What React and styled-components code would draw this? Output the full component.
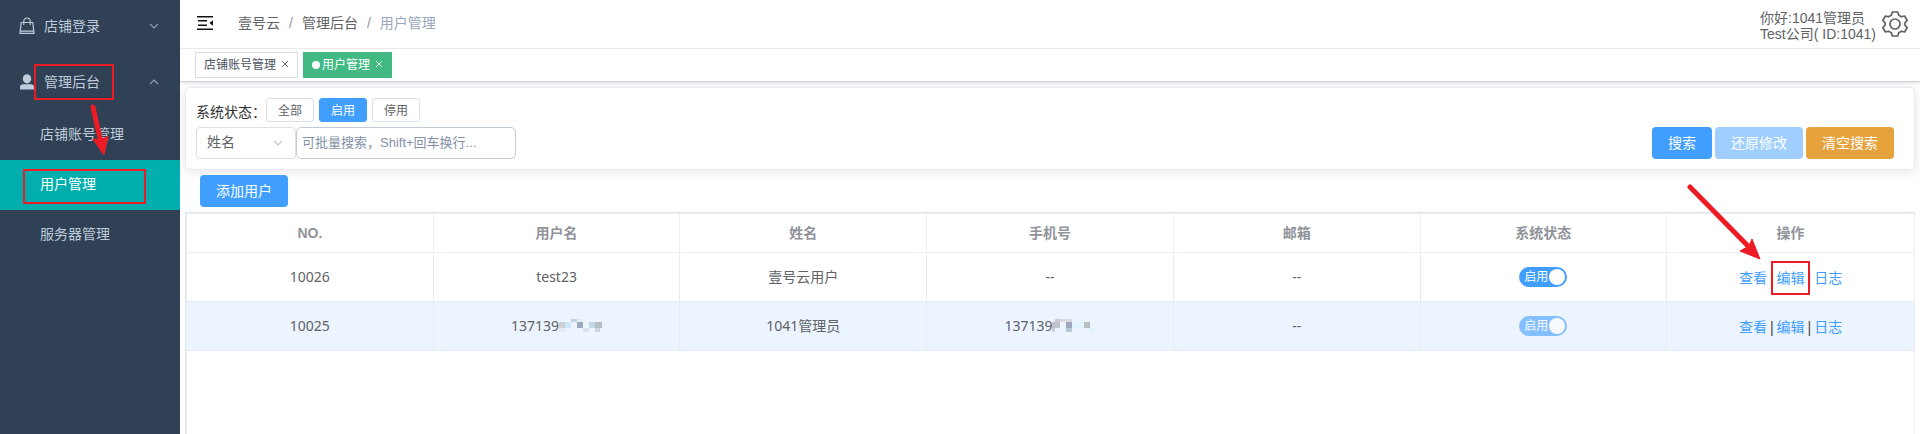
import React from 'react';
import styled, { createGlobalStyle, css } from 'styled-components';

const GlobalStyle = createGlobalStyle`
  * {
    box-sizing: border-box;
  }

  body {
    margin: 0;
    background: #fff;
    color: #606266;
    font-family: "Liberation Sans", "Noto Sans CJK SC", sans-serif;
    font-size: 14px;
    line-height: 20px;
  }

  button, input, select {
    font-family: inherit;
  }

  a {
    text-decoration: none;
  }
`;

const Layout = styled.div`
  display: flex;
  min-height: 100vh;
`;

/* sidebar */

const Sidebar = styled.aside`
  flex: 0 0 180px;
  overflow: hidden;
  background: #304156;
`;

const Menu = styled.nav`
  display: flex;
  flex-direction: column;
  margin-top: -2px;
`;

const MenuGroup = styled.button`
  display: flex;
  align-items: center;
  gap: 8px;
  height: 56px;
  padding: 0 20px 0 18px;
  border: 0;
  background: transparent;
  color: #bfcbd9;
  font-size: 14px;
  line-height: 20px;
  text-align: left;
  cursor: pointer;
`;

const GroupLabel = styled.span`
  flex: 1;
`;

const MenuLink = styled.a`
  display: flex;
  align-items: center;
  height: 50px;
  padding: 0 0 2px 40px;
  color: #bfcbd9;

  ${({ $active }) => $active && css`
    background: #00aeae;
    color: #fff;
  `}
`;

/* header */

const Main = styled.main`
  display: flex;
  flex: 1;
  flex-direction: column;
  min-width: 0;
`;

const Header = styled.header`
  display: flex;
  align-items: center;
  height: 49px;
  padding: 0 12px 0 16px;
  border-bottom: 1px solid #eee;
`;

const IconButton = styled.button`
  display: flex;
  padding: 0;
  border: 0;
  background: transparent;
  cursor: pointer;
`;

const FoldButton = styled(IconButton)`
  padding-bottom: 3px;
`;

const Breadcrumb = styled.nav`
  display: flex;
  flex: 1;
  gap: 9px;
  padding: 0 0 2px 24px;
`;

const Crumb = styled.a`
  color: ${({ $current }) => ($current ? '#97a8be' : '#606266')};
`;

const Slash = styled.span`
  color: #8f95a0;
`;

const Account = styled.div`
  margin-right: 6px;
  padding-top: 3px;
  line-height: 16px;
`;

/* opened pages */

const Tags = styled.div`
  display: flex;
  align-items: center;
  gap: 5px;
  height: 33px;
  padding: 0 15px;
  border-bottom: 1px solid #d0d4db;
  box-shadow: 0 1px 3px rgba(0, 0, 0, .12);
`;

const Tag = styled.div`
  display: flex;
  align-items: center;
  height: 26px;
  padding: 0 8px;
  border: 1px solid ${({ $active }) => ($active ? '#42b983' : '#d8dce5')};
  background: ${({ $active }) => ($active ? '#42b983' : '#fff')};
  color: ${({ $active }) => ($active ? '#fff' : '#495060')};
  font-size: 12px;
`;

const Dot = styled.i`
  width: 8px;
  height: 8px;
  margin-right: 2px;
  border-radius: 50%;
  background: #fff;
`;

const TagLink = styled.a`
  color: inherit;
`;

const TagClose = styled(IconButton)`
  padding: 0 0 2px 5px;
  color: inherit;
`;

/* search panel */

const Content = styled.div`
  display: flex;
  flex: 1;
  flex-direction: column;
  padding: 5px 5px 0;
`;

const Card = styled.section`
  display: flex;
  flex-direction: column;
  gap: 5px;
  padding: 10px 20px 10px 10px;
  border: 1px solid #e6e9f0;
  border-radius: 4px;
  box-shadow: 0 2px 12px rgba(0, 0, 0, .1);
`;

const StatusRow = styled.div`
  display: flex;
  align-items: center;
  gap: 5px;
`;

const StatusLabel = styled.span`
  margin-right: -5px;
  padding-top: 4px;
  color: #303133;
`;

const StatusButton = styled.button`
  width: 48px;
  height: 24px;
  padding: 0 0 1px;
  border: 1px solid ${({ $active }) => ($active ? '#409eff' : '#dcdfe6')};
  border-radius: 3px;
  background: ${({ $active }) => ($active ? '#409eff' : '#fff')};
  color: ${({ $active }) => ($active ? '#fff' : '#606266')};
  font-size: 12px;
  cursor: pointer;
`;

const SearchRow = styled.div`
  display: flex;
  align-items: center;
`;

const SelectBox = styled.div`
  display: flex;
  position: relative;
  width: 100px;

  svg {
    position: absolute;
    top: 10px;
    right: 12px;
    pointer-events: none;
  }
`;

const Select = styled.select`
  appearance: none;
  width: 100%;
  height: 32px;
  padding: 0 10px 2px;
  border: 1px solid #dcdfe6;
  border-radius: 4px;
  background: #fff;
  color: #606266;
  font-size: 14px;
`;

const SearchInput = styled.input`
  width: 220px;
  height: 32px;
  padding: 0 5px 2px;
  border: 1px solid #bfcbd9;
  border-radius: 5px;
  color: #606266;
  font-size: 13px;

  &::placeholder {
    color: #8391a5;
  }
`;

const Actions = styled.div`
  display: flex;
  gap: 3px;
  margin-left: auto;
`;

const colors = {
  primary: '#409eff',
  disabled: '#a0cfff',
  warning: '#e6a23c',
};

const Button = styled.button`
  height: 32px;
  padding: 0 16px 2px;
  border: 0;
  border-radius: 4px;
  background: ${({ $type }) => colors[$type]};
  color: #fff;
  font-size: 14px;
  cursor: pointer;
`;

const Toolbar = styled.div`
  display: flex;
  padding: 5px 15px;
`;

/* table */

const TableWrapper = styled.div`
  flex: 1;
  border: solid #dfe6ec;
  border-width: 1px 0 0 1px;
`;

const TableInner = styled.div`
  height: 100%;
  border: 1px solid #ebeef5;
  border-bottom: 0;
`;

const Table = styled.table`
  width: 100%;
  table-layout: fixed;
  border-spacing: 0;
`;

const Th = styled.th`
  height: 39px;
  padding: 0 0 1px;
  border-bottom: 1px solid #ebeef5;
  color: #909399;
  font-weight: 700;

  &:not(:last-child) {
    border-right: 1px solid #ebeef5;
  }
`;

const Td = styled.td`
  height: 49px;
  padding: 0 0 1px;
  border-bottom: 1px solid #e6ebf5;
  text-align: center;
  font-family: "Noto Sans", "Noto Sans CJK SC", sans-serif;

  &:not(:last-child) {
    border-right: 1px solid #e6ebf5;
  }
`;

const Tr = styled.tr`
  background: ${({ $current }) => ($current ? '#ecf4ff' : '#fff')};
`;

const Masked = styled.span`
  display: inline-flex;
  align-items: center;
`;

const Switch = styled.label`
  display: inline-flex;
  align-items: center;
  gap: 1px;
  width: 48px;
  height: 20px;
  padding: 0 2px 0 5px;
  border-radius: 10px;
  background: #409eff;
  color: #fff;
  font-size: 12px;
  vertical-align: top;
  opacity: ${({ $disabled }) => ($disabled ? .6 : 1)};

  &:after {
    content: '';
    flex: 0 0 16px;
    height: 16px;
    border-radius: 50%;
    background: #fff;
  }
`;

const SwitchInput = styled.input`
  appearance: none;
  position: absolute;
  width: 0;
  height: 0;
  margin: 0;
`;

const Operations = styled.div`
  display: flex;
  justify-content: center;
  gap: 1px;
  padding-top: 3px;
`;

const Operation = styled.a`
  color: #409eff;
`;

const Bar = styled.span`
  color: #303133;
`;

/* guide marks drawn over the page */

const Marked = styled.span`
  position: relative;
`;

const Frame = styled.i`
  position: absolute;
  top: ${({ $top }) => $top}px;
  left: ${({ $left }) => $left}px;
  width: ${({ $width }) => $width}px;
  height: ${({ $height }) => $height}px;
  border: 2px solid #ed1c24;
  pointer-events: none;
`;

const ArrowSvg = styled.svg`
  position: absolute;
  top: ${({ $top }) => $top}px;
  left: ${({ $left }) => $left}px;
  z-index: 1;
  pointer-events: none;
`;

const BagIcon = () => (
  <svg width="18" height="18" viewBox="0 0 18 18" fill="none" stroke="#bfcbd9" strokeWidth="1.2">
    <path d="M3.2 5.5h11.6L16 16.4H2z" />
    <path d="M5.8 8V4.2a3.2 3.2 0 0 1 6.4 0V8M2 14.2h14" />
  </svg>
);

const UserIcon = () => (
  <svg width="18" height="18" viewBox="0 0 18 18" fill="#bfcbd9">
    <ellipse cx="9" cy="5.8" rx="4.2" ry="4.6" />
    <path d="M2 16.6v-2.4q0-3 3.2-3h7.6q3.2 0 3.2 3v2.4z" />
  </svg>
);

const Chevron = ({ up, color = '#909fb0', size = 12 }) => (
  <svg width={size} height={size} viewBox="0 0 12 12" fill="none" stroke={color} strokeWidth="1.1">
    <path d={up ? 'M2 8l4-4 4 4' : 'M2 4l4 4 4-4'} />
  </svg>
);

const FoldIcon = () => (
  <svg width="18" height="16" viewBox="0 0 18 16" fill="#111">
    <path d="M1 1h16v1.4H1zM2 5.1h9v1.4H2zM2 9.6h9V11H2zM1 13.6h16V15H1zM17 5.2v5.6L13.4 8z" />
  </svg>
);

const GearIcon = () => (
  <svg width="26" height="26" viewBox="0 0 26 26" fill="none" stroke="#606266" strokeWidth="1.7" strokeLinejoin="round">
    <path d="M10.3 1h5.4l1 3.2 2.8 1.6 3.1-.8 2.6 4.5-2.2 2.2v2.6l2.2 2.2-2.6 4.5-3.1-.8-2.8 1.6-1 3.2h-5.4l-1-3.2-2.8-1.6-3.1.8-2.6-4.5L3 14.3v-2.6L.8 9.5 3.4 5l3.1.8 2.8-1.6z" />
    <circle cx="13" cy="13" r="5" />
  </svg>
);

const CloseIcon = () => (
  <svg width="8" height="8" viewBox="0 0 8 8" fill="none" stroke="currentColor" strokeWidth=".8">
    <path d="M1 1l6 6M7 1L1 7" />
  </svg>
);

const mosaics = {
  username: [
    [12, 0, 6, 3, '#c8d1de'], [18, 0, 6, 3, '#e5edf3'],
    [0, 3, 6, 6, '#d1d2d7'], [6, 3, 6, 6, '#cce6ff'], [18, 3, 6, 6, '#9aa9bf'],
    [30, 3, 6, 6, '#c5d8ea'], [36, 3, 7, 6, '#b5c0c0'],
    [0, 9, 6, 4, '#e4ebf3'], [24, 9, 6, 4, '#dae3e9'], [36, 9, 5, 4, '#ccd6dc'],
  ],
  phone: [
    [3, 0, 5, 3, '#cccdd4'], [8, 0, 12, 3, '#d9d8da'],
    [0, 3, 8, 6, '#c0c1ca'], [14, 3, 6, 6, '#9daabd'], [20, 3, 12, 6, '#e0f3fe'],
    [32, 3, 6, 6, '#b5c0c0'],
    [0, 9, 3, 4, '#ccd0da'], [14, 9, 6, 4, '#b9c6d6'], [38, 9, 5, 4, '#e0f3fe'],
  ],
};

const Mosaic = ({ name }) => (
  <svg width="43" height="13" viewBox="0 0 43 13" shapeRendering="crispEdges">
    {mosaics[name].map(([x, y, width, height, fill], i) => (
      <rect key={i} x={x} y={y} width={width} height={height} fill={fill} />
    ))}
  </svg>
);

const users = [
  { id: 10026, username: 'test23', name: '壹号云用户', phone: '--', email: '--' },
  { id: 10025, username: '137139', name: '1041管理员', phone: '137139', email: '--', masked: true },
];

const columns = ['NO.', '用户名', '姓名', '手机号', '邮箱', '系统状态', '操作'];

const UserRow = ({ user, marked }) => (
  <Tr $current={user.masked}>
    <Td>{user.id}</Td>
    <Td>
      <Masked>{user.username}{user.masked && <Mosaic name="username" />}</Masked>
    </Td>
    <Td>{user.name}</Td>
    <Td>
      <Masked>{user.phone}{user.masked && <Mosaic name="phone" />}</Masked>
    </Td>
    <Td>{user.email}</Td>
    <Td>
      <Switch $disabled={user.masked}>
        <SwitchInput type="checkbox" defaultChecked disabled={user.masked} />
        启用
      </Switch>
    </Td>
    <Td>
      <Operations>
        <Operation href="#view">查看</Operation>
        <Bar>|</Bar>
        <Marked>
          <Operation href="#edit">编辑</Operation>
          {marked && (
            <>
              <Frame $top={-7} $left={-6} $width={39} $height={34} />
              <ArrowSvg $top={-86} $left={-90} width="76" height="78" viewBox="0 0 76 78">
                <path d="M3 5L62 65" stroke="#ed1c24" strokeWidth="5" strokeLinecap="round" />
                <path d="M73 77L65 57l-3 7-9 5z" fill="#ed1c24" stroke="#ed1c24" strokeLinejoin="round" />
              </ArrowSvg>
            </>
          )}
        </Marked>
        <Bar>|</Bar>
        <Operation href="#log">日志</Operation>
      </Operations>
    </Td>
  </Tr>
);

const App = () => {
  return (
    <Layout>
      <GlobalStyle />
      <Sidebar>
        <Menu>
          <MenuGroup type="button">
            <BagIcon />
            <GroupLabel>店铺登录</GroupLabel>
            <Chevron />
          </MenuGroup>
          <MenuGroup type="button">
            <UserIcon />
            <GroupLabel>
              <Marked>
                管理后台
                <Frame $top={-10} $left={-10} $width={80} $height={36} />
                <ArrowSvg $top={28} $left={44} width="24" height="56" viewBox="0 0 24 56">
                  <path d="M5 5l8 36" stroke="#ed1c24" strokeWidth="5" strokeLinecap="round" />
                  <path d="M16 53l4-19-7 4-8-1z" fill="#ed1c24" stroke="#ed1c24" strokeLinejoin="round" />
                </ArrowSvg>
              </Marked>
            </GroupLabel>
            <Chevron up />
          </MenuGroup>
          <MenuLink href="#accounts">店铺账号管理</MenuLink>
          <MenuLink href="#users" $active>
            <Marked>
              用户管理
              <Frame $top={-5} $left={-17} $width={123} $height={35} />
            </Marked>
          </MenuLink>
          <MenuLink href="#servers">服务器管理</MenuLink>
        </Menu>
      </Sidebar>
      <Main>
        <Header>
          <FoldButton type="button" aria-label="折叠菜单"><FoldIcon /></FoldButton>
          <Breadcrumb>
            <Crumb href="#home">壹号云</Crumb>
            <Slash>/</Slash>
            <Crumb href="#admin">管理后台</Crumb>
            <Slash>/</Slash>
            <Crumb href="#users" $current>用户管理</Crumb>
          </Breadcrumb>
          <Account>
            <div>你好:1041管理员</div>
            <div>Test公司( ID:1041)</div>
          </Account>
          <IconButton type="button" aria-label="设置"><GearIcon /></IconButton>
        </Header>
        <Tags>
          <Tag>
            <TagLink href="#accounts">店铺账号管理</TagLink>
            <TagClose type="button" aria-label="关闭"><CloseIcon /></TagClose>
          </Tag>
          <Tag $active>
            <Dot />
            <TagLink href="#users">用户管理</TagLink>
            <TagClose type="button" aria-label="关闭"><CloseIcon /></TagClose>
          </Tag>
        </Tags>
        <Content>
          <Card>
            <StatusRow>
              <StatusLabel>系统状态：</StatusLabel>
              <StatusButton type="button">全部</StatusButton>
              <StatusButton type="button" $active>启用</StatusButton>
              <StatusButton type="button">停用</StatusButton>
            </StatusRow>
            <SearchRow>
              <SelectBox>
                <Select aria-label="搜索字段" defaultValue="name">
                  <option value="name">姓名</option>
                </Select>
                <Chevron color="#c0c4cc" />
              </SelectBox>
              <SearchInput aria-label="搜索内容" placeholder="可批量搜索，Shift+回车换行..." />
              <Actions>
                <Button type="button" $type="primary">搜索</Button>
                <Button type="button" $type="disabled" disabled>还原修改</Button>
                <Button type="button" $type="warning">清空搜索</Button>
              </Actions>
            </SearchRow>
          </Card>
          <Toolbar>
            <Button type="button" $type="primary">添加用户</Button>
          </Toolbar>
          <TableWrapper>
            <TableInner>
              <Table>
                <thead>
                  <tr>
                    {columns.map(title => <Th key={title}>{title}</Th>)}
                  </tr>
                </thead>
                <tbody>
                  {users.map((user, i) => (
                    <UserRow key={user.id} user={user} marked={i === 0} />
                  ))}
                </tbody>
              </Table>
            </TableInner>
          </TableWrapper>
        </Content>
      </Main>
    </Layout>
  );
};

export default App;
